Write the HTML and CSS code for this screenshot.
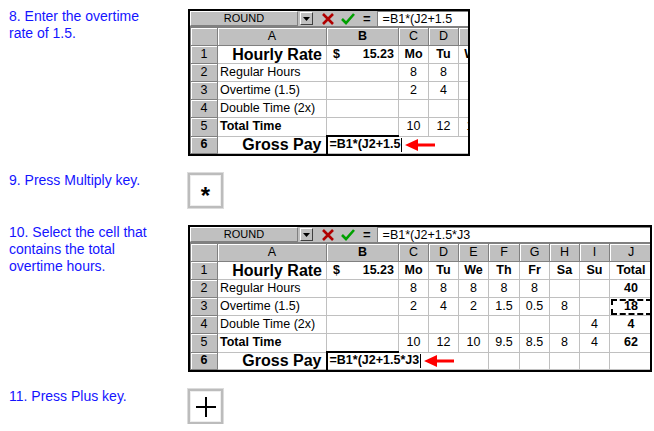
FILE: index.html
```html
<!DOCTYPE html>
<html lang="en">
<head>
    <meta charset="UTF-8">
    <title>Gross Pay Formula</title>
    <link rel="stylesheet" href="styles.css">
</head>
<body>
<div class="page">

    <!-- step 8 -->
    <div class="step">
        <div class="note">8. Enter the overtime<br>rate of 1.5.</div>
        <div class="sheet sheet-narrow">
            <div class="fbar">
                <div class="namebox">ROUND</div>
                <div class="dropbtn"><svg width="7" height="4" viewBox="0 0 7 4"><path d="M0 0H7L3.5 4Z" fill="#000"/></svg></div>
                <div class="fbtns">
                    <svg width="12" height="12" viewBox="0 0 12 12"><path d="M1 1L11 11M11 1L1 11" stroke="#b00000" stroke-width="2.6"/></svg>
                    <svg width="14" height="12" viewBox="0 0 14 12"><path d="M1 6L5 10L13 1" stroke="#00a000" stroke-width="2.6" fill="none"/></svg>
                    <span class="eq">=</span>
                </div>
                <div class="fedit">=B1*(J2+1.5</div>
            </div>
            <table class="grid grid-short">
                <colgroup>
                    <col class="c-row"><col class="c-a"><col class="c-b"><col class="c-d"><col class="c-d"><col class="c-d">
                </colgroup>
                <tr class="head">
                    <th></th><th>A</th><th class="sel">B</th><th>C</th><th>D</th><th>E</th>
                </tr>
                <tr>
                    <th>1</th><td class="big">Hourly Rate</td><td class="rate"><span>$</span><span>15.23</span></td>
                    <td class="b">Mo</td><td class="b">Tu</td><td class="b">We</td>
                </tr>
                <tr>
                    <th>2</th><td class="lbl">Regular Hours</td><td></td>
                    <td>8</td><td>8</td><td>8</td>
                </tr>
                <tr>
                    <th>3</th><td class="lbl">Overtime (1.5)</td><td></td>
                    <td>2</td><td>4</td><td>2</td>
                </tr>
                <tr>
                    <th>4</th><td class="lbl">Double Time (2x)</td><td></td>
                    <td></td><td></td><td></td>
                </tr>
                <tr>
                    <th>5</th><td class="lbl b">Total Time</td><td></td>
                    <td>10</td><td>12</td><td>10</td>
                </tr>
                <tr class="last">
                    <th class="sel">6</th><td class="big">Gross Pay</td>
                    <td class="edit"><span class="etext">=B1*(J2+1.5</span><span class="caret"></span><svg class="arrow" width="30" height="12" viewBox="0 0 30 12"><path d="M0 6L13 0V4.5H30V7.5H13V12Z" fill="#f00"/></svg></td>
                    <td class="flow"></td><td class="flow"></td><td class="flow"></td>
                </tr>
            </table>
        </div>
    </div>

    <!-- step 9 -->
    <div class="step">
        <div class="note">9. Press Multiply key.</div>
        <div class="key"><span class="star">*</span></div>
    </div>

    <!-- step 10 -->
    <div class="step">
        <div class="note">10. Select the cell that<br>contains the total<br>overtime hours.</div>
        <div class="sheet sheet-wide">
            <div class="fbar">
                <div class="namebox">ROUND</div>
                <div class="dropbtn"><svg width="7" height="4" viewBox="0 0 7 4"><path d="M0 0H7L3.5 4Z" fill="#000"/></svg></div>
                <div class="fbtns">
                    <svg width="12" height="12" viewBox="0 0 12 12"><path d="M1 1L11 11M11 1L1 11" stroke="#b00000" stroke-width="2.6"/></svg>
                    <svg width="14" height="12" viewBox="0 0 14 12"><path d="M1 6L5 10L13 1" stroke="#00a000" stroke-width="2.6" fill="none"/></svg>
                    <span class="eq">=</span>
                </div>
                <div class="fedit">=B1*(J2+1.5*J3</div>
            </div>
            <table class="grid">
                <colgroup>
                    <col class="c-row"><col class="c-a"><col class="c-b"><col class="c-d"><col class="c-d"><col class="c-d"><col class="c-f"><col class="c-d"><col class="c-d"><col class="c-d"><col class="c-j">
                </colgroup>
                <tr class="head">
                    <th></th><th>A</th><th class="sel">B</th><th>C</th><th>D</th><th>E</th><th>F</th><th>G</th><th>H</th><th>I</th><th>J</th>
                </tr>
                <tr>
                    <th>1</th><td class="big">Hourly Rate</td><td class="rate"><span>$</span><span>15.23</span></td>
                    <td class="b">Mo</td><td class="b">Tu</td><td class="b">We</td><td class="b">Th</td><td class="b">Fr</td><td class="b">Sa</td><td class="b">Su</td><td class="b">Total</td>
                </tr>
                <tr>
                    <th>2</th><td class="lbl">Regular Hours</td><td></td>
                    <td>8</td><td>8</td><td>8</td><td>8</td><td>8</td><td></td><td></td><td class="b">40</td>
                </tr>
                <tr>
                    <th>3</th><td class="lbl">Overtime (1.5)</td><td></td>
                    <td>2</td><td>4</td><td>2</td><td>1.5</td><td>0.5</td><td>8</td><td></td><td class="b marked">18</td>
                </tr>
                <tr>
                    <th>4</th><td class="lbl">Double Time (2x)</td><td></td>
                    <td></td><td></td><td></td><td></td><td></td><td></td><td>4</td><td class="b">4</td>
                </tr>
                <tr>
                    <th>5</th><td class="lbl b">Total Time</td><td></td>
                    <td>10</td><td>12</td><td>10</td><td>9.5</td><td>8.5</td><td>8</td><td>4</td><td class="b">62</td>
                </tr>
                <tr class="last">
                    <th class="sel">6</th><td class="big">Gross Pay</td>
                    <td class="edit"><span class="etext">=B1*(J2+1.5*J3</span><span class="caret"></span><svg class="arrow" width="30" height="12" viewBox="0 0 30 12"><path d="M0 6L13 0V4.5H30V7.5H13V12Z" fill="#f00"/></svg></td>
                    <td class="flow"></td><td class="flow"></td><td class="flow"></td><td></td><td></td><td></td><td></td><td></td>
                </tr>
            </table>
        </div>
    </div>

    <!-- step 11 -->
    <div class="step">
        <div class="note">11. Press Plus key.</div>
        <div class="key">
            <svg width="22" height="22" viewBox="0 0 22 22"><path d="M11 1V21M1 11H21" stroke="#000" stroke-width="2"/></svg>
        </div>
    </div>

</div>
</body>
</html>
```

FILE: styles.css
```css
html, body {
    margin: 0;
    padding: 0;
    background: #fff;
}

body {
    font-family: "Liberation Sans", Arial, sans-serif;
    color: #000;
}

.page {
    display: flex;
    flex-direction: column;
    gap: 17px;
    padding: 9px 0 0 9px;
}

.step {
    display: flex;
    align-items: flex-start;
}

.note {
    width: 179px;
    flex: none;
    margin-top: -1px;
    color: #1414ff;
    font-size: 14px;
    line-height: 17px;
}

/* spreadsheet window */
.sheet {
    border: 2px solid #000;
    overflow: hidden;
    background: #fff;
}
.sheet-narrow { width: 278px; }
.sheet-wide { width: 460px; }

.fbar {
    display: flex;
    align-items: center;
    height: 15px;
    background: #c0c0c0;
    border-bottom: 1px solid #808080;
}

.namebox {
    width: 106px;
    height: 13px;
    flex: none;
    border: 1px solid;
    border-color: #fff #808080 #808080 #fff;
    font-size: 11px;
    line-height: 13px;
    text-align: center;
}

.dropbtn {
    width: 11px;
    height: 11px;
    flex: none;
    margin-left: 2px;
    display: flex;
    align-items: center;
    justify-content: center;
    background: #c0c0c0;
    border: 1px solid;
    border-color: #fff #404040 #404040 #fff;
}

.fbtns {
    display: flex;
    align-items: center;
    gap: 7px;
    margin-left: 9px;
    flex: none;
}

.eq {
    font-weight: bold;
    font-size: 13px;
    line-height: 13px;
    margin-left: 1px;
}

.fedit {
    flex: 1;
    height: 14px;
    margin-left: 6px;
    padding-left: 5px;
    background: #fff;
    border-left: 1px solid #808080;
    border-top: 1px solid #808080;
    font-size: 12.5px;
    line-height: 14px;
    white-space: nowrap;
    overflow: hidden;
}

/* grid */
.grid {
    table-layout: fixed;
    border-collapse: collapse;
    width: 460px;
    font-size: 12.5px;
    line-height: 15px;
}
.grid-short { width: 298px; }

.c-row { width: 27px; }
.c-a { width: 109px; }
.c-b { width: 72px; }
.c-d { width: 30px; }
.c-f { width: 31px; }
.c-j { width: 43px; }

.grid tr { height: 18px; }

.grid th {
    height: 17px;
    padding: 0;
    background: #c0c0c0;
    font-weight: normal;
    text-align: center;
    border: 1px solid #808080;
    box-shadow: inset 1px 1px 0 #fff;
}

.grid th.sel { font-weight: bold; }

.grid td {
    height: 17px;
    padding: 0 2px;
    border: 1px solid #c0c0c0;
    text-align: center;
    white-space: nowrap;
    overflow: hidden;
}

.grid td.lbl { text-align: left; }
.grid td.b { font-weight: bold; }

.grid td.big {
    text-align: right;
    font-weight: bold;
    font-size: 16px;
    line-height: 15px;
    padding-right: 4px;
}

.grid td.rate {
    font-weight: bold;
    padding: 0 4px 0 6px;
}
.rate span:last-child { float: right; }
.rate span:first-child { float: left; }

.grid td.marked {
    outline: 2px dashed #000;
    outline-offset: -3px;
}

/* last row: the edited cell has a heavy top edge */
.grid tr.last { height: 17px; }
.grid tr.last th,
.grid tr.last td { height: 16px; }

/* cell being edited: text runs on over the next cells */
.grid td.edit {
    overflow: visible;
    text-align: left;
    font-weight: bold;
    border-top: 2px solid #000;
    border-left: 2px solid #000;
    border-right-style: hidden;
    padding-left: 2px;
}

.grid td.flow { border-left-style: hidden; }

.etext { vertical-align: middle; }

.caret {
    display: inline-block;
    width: 1px;
    height: 14px;
    margin-left: 1px;
    background: #000;
    vertical-align: middle;
}

.arrow {
    margin-left: 3px;
    vertical-align: middle;
}

/* key caps */
.key {
    width: 31px;
    height: 31px;
    display: flex;
    align-items: center;
    justify-content: center;
    background: #fff;
    border: 2px solid #bcbcbc;
    box-shadow: 0 0 0 1px #dcdcdc, inset 0 0 0 1px #eee;
}

.star {
    font-size: 24px;
    font-weight: bold;
    line-height: 24px;
    margin-top: 10px;
}
```
